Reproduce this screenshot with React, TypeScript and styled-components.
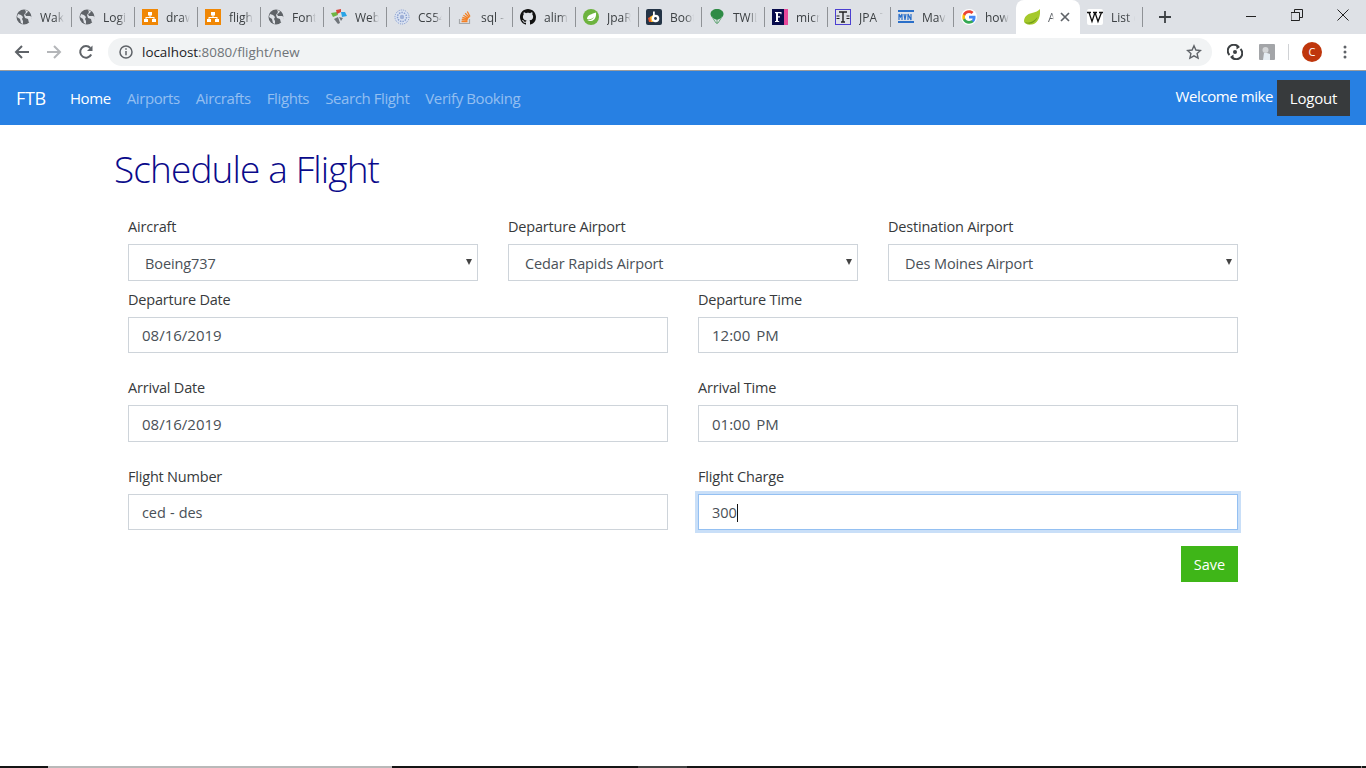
import React from "react";
import styled, { createGlobalStyle } from "styled-components";

const Global = createGlobalStyle`
  html, body { margin: 0; padding: 0; background: #fff; }
  body { font-family: "Open Sans", "Liberation Sans", sans-serif; overflow: hidden; }
  #root { height: 768px; }
`;

const Page = styled.div`
  display: flex;
  flex-direction: column;
  height: 768px;
  width: 1366px;
`;

/* ---------- browser chrome ---------- */
const TabStrip = styled.div`
  display: flex;
  align-items: flex-start;
  height: 34px;
  background: #dee1e6;
  padding-left: 9px;
`;
const Tab = styled.div<{ $last?: boolean }>`
  width: ${(p) => (p.$last ? 62 : 63)}px;
  height: 34px;
  box-sizing: border-box;
  padding-left: 7px;
  display: flex;
  align-items: center;
  gap: 8px;
  position: relative;
  flex: none;
  &::after {
    content: "";
    display: ${(p) => (p.$last ? "none" : "block")};
    position: absolute;
    right: 0;
    top: 7px;
    width: 1px;
    height: 20px;
    background: #8f9296;
  }
`;
const ActiveTab = styled(Tab)`
  width: 64px;
  background: #fff;
  border-radius: 8px 8px 0 0;
  padding-left: 8px;
  &::after { display: none; }
`;
const TabLabel = styled.span`
  font-family: "Open Sans", sans-serif;
  font-size: 12px;
  color: #3c4043;
  white-space: nowrap;
  width: 24px;
  overflow: hidden;
  -webkit-mask-image: linear-gradient(90deg, #000 65%, transparent);
  mask-image: linear-gradient(90deg, #000 65%, transparent);
`;
const ActiveLabel = styled(TabLabel)`
  width: 6px;
  color: #5f6368;
`;
const TabClose = styled.span`
  display: flex;
  margin-left: -2px;
`;
const NewTab = styled.div`
  display: flex;
  align-items: center;
  justify-content: center;
  width: 44px;
  height: 34px;
`;
const WindowButtons = styled.div`
  margin-left: auto;
  display: flex;
  height: 30px;
`;
const WindowButton = styled.div`
  width: 46px;
  display: flex;
  align-items: center;
  justify-content: center;
`;
const Toolbar = styled.div`
  display: flex;
  align-items: center;
  height: 37px;
  flex: none;
  background: #fff;
  padding: 0 0 1px 6px;
  box-sizing: border-box;
  border-bottom: 1px solid #9c9c9c;
`;
const ToolButton = styled.div`
  width: 32px;
  display: flex;
  justify-content: center;
`;
const Omnibox = styled.div`
  flex: none;
  width: 1104px;
  height: 28px;
  margin-left: 6px;
  background: #f1f3f4;
  border-radius: 14px;
  display: flex;
  align-items: center;
  padding-left: 11px;
  padding-right: 10px;
  box-sizing: border-box;
`;
const Url = styled.span`
  font-family: "Open Sans", sans-serif;
  font-size: 13.4px;
  color: #6f7378;
  margin-left: 9px;
  flex: 1;
`;
const Host = styled.span`
  color: #202124;
`;
const ToolbarRight = styled.div`
  display: flex;
  align-items: center;
  margin-left: 7px;
`;
const ExtSlot = styled.div`
  width: 32px;
  display: flex;
  justify-content: center;
`;
const ToolDivider = styled.div`
  width: 1px;
  height: 16px;
  background: #d0d2d5;
  margin: 0 13px 0 5px;
`;
const Avatar = styled.div`
  width: 20px;
  height: 20px;
  border-radius: 50%;
  background: #bf360c;
  color: #fff;
  font-family: "Open Sans", sans-serif;
  font-size: 11px;
  line-height: 20px;
  text-align: center;
`;
const MenuDots = styled.div`
  margin-left: 21px;
  display: flex;
`;

/* ---------- app nav ---------- */
const Navbar = styled.nav`
  height: 54px;
  flex: none;
  box-sizing: border-box;
  background: #2780e3;
  display: flex;
  align-items: center;
  padding: 0 16px;
`;
const Brand = styled.span`
  font-size: 18px;
  color: #fff;
  margin-right: 16px;
  letter-spacing: -0.3px;
`;
const NavLinks = styled.div`
  display: flex;
`;
const NavLink = styled.a<{ $active?: boolean }>`
  font-size: 15px;
  letter-spacing: -0.4px;
  padding: 0 8px;
  color: ${(p) => (p.$active ? "#fff" : "rgba(255,255,255,.5)")};
`;
const NavRight = styled.div`
  margin-left: auto;
  display: flex;
  align-items: center;
`;
const Welcome = styled.span`
  font-size: 15px;
  letter-spacing: -0.42px;
  color: #fff;
  margin-right: 4px;
  position: relative;
  top: -2px;
`;
const Logout = styled.button`
  height: 36px;
  width: 73px;
  border: 0;
  padding: 0;
  background: #373a3c;
  color: #fff;
  font: inherit;
  font-size: 15px;
  letter-spacing: -0.2px;
`;

/* ---------- form ---------- */
const Main = styled.main`
  width: 1140px;
  margin: 0 auto;
  flex: 1;
  box-sizing: border-box;
`;
const Title = styled.h1`
  margin: 18px 0 0 1px;
  font-weight: 300;
  font-size: 37px;
  letter-spacing: -0.88px;
  line-height: 52px;
  color: #0a0a8a;
`;
const Form = styled.form`
  padding: 0 15px;
  margin-top: 19px;
`;
const Row = styled.div<{ $cols: number; $gap: number }>`
  display: grid;
  grid-template-columns: repeat(${(p) => p.$cols}, 1fr);
  column-gap: 30px;
  margin-bottom: ${(p) => p.$gap}px;
`;
const Group = styled.div`
  display: flex;
  flex-direction: column;
`;
const Label = styled.label`
  font-size: 14.5px;
  letter-spacing: -0.2px;
  line-height: 24px;
  color: #373a3c;
  padding-top: 1px;
  margin-bottom: 5px;
`;
const Control = styled.div<{ $focused?: boolean; $select?: boolean; $numeric?: boolean; $tall?: boolean }>`
  height: ${(p) => (p.$tall ? 37 : 36)}px;
  box-sizing: border-box;
  border: 1px solid ${(p) => (p.$focused ? "#94c0f2" : "#ced4da")};
  box-shadow: ${(p) => (p.$focused ? "0 0 0 3px rgba(39,128,227,.25)" : "none")};
  padding-left: ${(p) => (p.$select ? 16 : 13)}px;
  padding-top: ${(p) => (p.$numeric && !p.$tall ? 0 : 1)}px;
  font-size: ${(p) => (p.$numeric ? 15 : 14.5)}px;
  letter-spacing: ${(p) => (p.$numeric ? 0 : -0.1)}px;
  word-spacing: ${(p) => (p.$numeric ? 2 : p.$select ? 0 : 0.6)}px;
  color: #495057;
  background: #fff;
  display: flex;
  align-items: center;
  white-space: pre;
  position: relative;
`;
const Caret = styled.span`
  display: inline-block;
  width: 1px;
  height: 18px;
  background: #111;
`;
const SelectArrow = styled.span`
  position: absolute;
  right: 5px;
  top: 14px;
  width: 0;
  height: 0;
  border-left: 3px solid transparent;
  border-right: 3px solid transparent;
  border-top: 6px solid #444;
`;
const Actions = styled.div`
  display: flex;
  justify-content: flex-end;
  margin-top: 16px;
`;
const Save = styled.button`
  height: 36px;
  width: 57px;
  border: 0;
  padding: 0;
  background: #3fb618;
  color: #fff;
  font: inherit;
  font-size: 14.5px;
`;

/* ---------- OS bottom edge ---------- */
const Edge = styled.div`
  height: 2px;
  flex: none;
  display: flex;
  background: #151515;
`;
const EdgePart = styled.div<{ $w: number; $c: string }>`
  width: ${(p) => p.$w}px;
  background: ${(p) => p.$c};
`;

/* ---------- favicons ---------- */
const Globe = () => (
  <svg width="16" height="16" viewBox="0 0 16 16">
    <circle cx="8" cy="8" r="7.500" fill="#5f6368" />
    <path d="M2 5l3 1 2 2-1 2 1 2v3l-2-1-1-4-3-2zM9 1l3 1-1 2-2 1 1 2 4 0 2 1-1 4-2 2-1-4-3-1-1-3 2-3z" fill="#dee1e6" />
  </svg>
);
const Draw = () => (
  <svg width="16" height="16" viewBox="0 0 16 16">
    <rect width="16" height="16" fill="#f08705" />
    <path d="M6 3h4v3.500H8.500v1.500H12.500v2H14v3h-4v-3h1.500V9h-7v1H6v3H2v-3h1.500V8h4V6.500H6z" fill="#fff" />
  </svg>
);
const Pinwheel = () => (
  <svg width="16" height="16" viewBox="0 0 16 16">
    <path d="M0 4l6-1 1 3-5 2z" fill="#6fb544" />
    <path d="M8 2l5-1 0 3-4 2z" fill="#d9453a" transform="translate(-3 -1)" />
    <path d="M10 3l4 0 2 4-5 1z" fill="#2aa4e6" />
    <path d="M3 10l4-2 2 6-2 1z" fill="#70757a" />
    <path d="M8 8l4 1-2 3z" fill="#70757a" />
  </svg>
);
const Seal = () => (
  <svg width="16" height="16" viewBox="0 0 16 16">
    <circle cx="8" cy="8" r="7.500" fill="#dbe3f2" />
    <circle cx="8" cy="8" r="7" fill="none" stroke="#7d94c6" strokeDasharray="1 1" />
    <circle cx="8" cy="8" r="4.500" fill="none" stroke="#8aa0cf" strokeWidth="1.500" strokeDasharray="1.500 1" />
    <circle cx="8" cy="8" r="2.200" fill="#9fb1d8" />
  </svg>
);
const Stack = () => (
  <svg width="16" height="16" viewBox="0 0 16 16" fill="none">
    <path d="M2.500 10v4.500h10V10" stroke="#a5a7aa" strokeWidth="1.200" />
    <path d="M4.500 12.500h6M4.700 10.500l5.800.6M5.300 8.500l5.700 1.500M6.400 6.300l5.100 3M8.200 4.300l4.200 4.200M10.300 2.500l2.700 5" stroke="#f48024" strokeWidth="1.300" />
  </svg>
);
const GitHub = () => (
  <svg width="16" height="16" viewBox="0 0 16 16">
    <path fill="#111" d="M8 0C3.580 0 0 3.580 0 8c0 3.540 2.290 6.530 5.470 7.590.4.070.55-.17.55-.38 0-.19-.01-.82-.01-1.490-2.010.37-2.530-.49-2.690-.94-.09-.23-.48-.94-.82-1.130-.28-.15-.68-.52-.01-.53.63-.01 1.080.58 1.230.82.72 1.210 1.870.87 2.330.66.070-.52.280-.87.510-1.070-1.780-.2-3.640-.89-3.640-3.950 0-.87.310-1.590.820-2.150-.08-.2-.36-1.020.08-2.120 0 0 .67-.21 2.200.82.64-.18 1.320-.27 2-.27s1.360.09 2 .27c1.530-1.040 2.200-.82 2.200-.82.44 1.100.16 1.920.08 2.120.51.560.82 1.270.82 2.150 0 3.070-1.870 3.750-3.650 3.950.29.250.54.730.54 1.480 0 1.070-.01 1.930-.01 2.200 0 .21.150.46.550.38A8.010 8.010 0 0 0 16 8c0-4.420-3.580-8-8-8z" />
  </svg>
);
const Spring = () => (
  <svg width="16" height="16" viewBox="0 0 16 16">
    <circle cx="8" cy="8" r="8" fill="#6db33f" />
    <path d="M13 3.500c.5 4-1 8-5 8.500-2 .2-3.500-.5-4-1 3 1 6-1 7-3-2 2-5 3-7 2 0-4 5-5 9-6.500z" fill="#fff" />
  </svg>
);
const Boot = () => (
  <svg width="16" height="16" viewBox="0 0 16 16">
    <rect width="16" height="16" rx="2" fill="#243446" />
    <path d="M2 9l4-2v6H3z" fill="#e8562a" />
    <path d="M4 8l3-2v7H5z" fill="#f5b82e" />
    <circle cx="9.500" cy="9.500" r="3.800" fill="#fff" />
    <rect x="7" y="2.500" width="1.800" height="7" fill="#fff" />
    <circle cx="9.500" cy="9.500" r="1.400" fill="#243446" />
  </svg>
);
const Balloon = () => (
  <svg width="16" height="16" viewBox="0 0 16 16">
    <path d="M8 0c3.500 0 6.500 2 6.500 5 0 3-3.500 5-6.500 6-3-1-6.500-3-6.500-6 0-3 3-5 6.500-5z" fill="#2e8b45" />
    <path d="M2.500 7L7 14h2l4.500-7M8 10v5" stroke="#6aa97c" strokeWidth="1" fill="none" />
  </svg>
);
const Fav = () => (
  <svg width="16" height="16" viewBox="0 0 16 16">
    <rect width="12" height="16" fill="#070b4c" />
    <rect x="12" width="4" height="16" fill="#e8489a" />
    <path d="M3 3h6.500v2.300H8.500V4.200H6v3h2V8.400H6V12h1.200v1H3v-1h1V4.200H3z" fill="#fff" />
  </svg>
);
const JpaIcon = () => (
  <svg width="16" height="16" viewBox="0 0 16 16" fill="none">
    <rect x=".5" y=".5" width="15" height="15" stroke="#4b3fd1" />
    <path d="M4 3h8M8 3v10M6 13h4" stroke="#222" strokeWidth="1.400" />
    <path d="M1.500 7h3M1.500 9.500h3M11.500 7h3M11.500 9.500h3" stroke="#222" />
  </svg>
);
const Mvn = () => (
  <svg width="16" height="16" viewBox="0 0 16 16">
    <rect y="1" width="16" height="2" fill="#2a6fc9" />
    <rect y="12" width="16" height="2" fill="#2a6fc9" />
    <path d="M1 11V5l1.500 3L4 5v6M6 5l1 6 1-6M10 11V5l3 6V5" stroke="#2a6fc9" strokeWidth="1.200" fill="none" />
  </svg>
);
const Google = () => (
  <svg width="16" height="16" viewBox="0 0 48 48">
    <rect width="48" height="48" rx="24" fill="#fff" />
    <path fill="#4285F4" d="M43.600 24.500c0-1.500-.1-2.900-.4-4.300H24v8.100h11c-.5 2.600-1.900 4.700-4 6.200v5.200h6.500c3.800-3.500 6.100-8.700 6.100-15.200z" />
    <path fill="#34A853" d="M24 44c5.400 0 10-1.800 13.500-4.800L31 34c-1.800 1.200-4.100 2-7 2-5.300 0-9.900-3.600-11.500-8.500H5.800v5.300C9.100 39.400 16 44 24 44z" />
    <path fill="#FBBC05" d="M12.500 27.500c-.4-1.200-.7-2.500-.7-3.500s.3-2.300.7-3.500v-5.300H5.800C4.600 17.900 4 20.900 4 24s.6 6.100 1.800 8.800z" />
    <path fill="#EA4335" d="M24 12c3 0 5.700 1 7.800 3.100l5.800-5.800C34 6 29.400 4 24 4 16 4 9.100 8.600 5.800 15.200l6.700 5.300C14.100 15.600 18.700 12 24 12z" />
  </svg>
);
const Leaf = () => (
  <svg width="16" height="16" viewBox="0 0 16 16">
    <path d="M16 0c.5 6-1 14-8 15.500-4 .6-7.500-.5-8-3C0 8 3 5 8 4c3.500-.7 6.500-2 8-4z" fill="#a5c92b" />
    <path d="M.5 13c4 1.500 9 .5 13-5-2 5.500-8 9-13 5z" fill="#6f9a1a" />
  </svg>
);
const Wiki = () => (
  <svg width="16" height="16" viewBox="0 0 16 16">
    <rect width="16" height="16" rx="2" fill="#fff" />
    <path d="M0 3.500h4M2 3.500l3 9 3-9M6 3.500h4M8 3.500l3 9 3.500-9M12 3.500h4" fill="none" stroke="#111" strokeWidth="1.300" />
  </svg>
);

const tabs: [React.ReactNode, string][] = [
  [<Globe />, "Wak"],
  [<Globe />, "Logi"],
  [<Draw />, "draw"],
  [<Draw />, "fligh"],
  [<Globe />, "Font"],
  [<Pinwheel />, "Web"],
  [<Seal />, "CS54"],
  [<Stack />, "sql -"],
  [<GitHub />, "alim"],
  [<Spring />, "JpaR"],
  [<Boot />, "Boot"],
  [<Balloon />, "TWIL"],
  [<Fav />, "micr"],
  [<JpaIcon />, "JPA T"],
  [<Mvn />, "Mav"],
];

const stroke = { fill: "none", strokeLinecap: "square" as const };

export default function App() {
  return (
    <Page>
      <Global />
      <TabStrip>
        {tabs.map(([icon, label], i) => (
          <Tab key={i}>
            {icon}
            <TabLabel>{label}</TabLabel>
          </Tab>
        ))}
        <Tab $last>
          <Google />
          <TabLabel>how</TabLabel>
        </Tab>
        <ActiveTab $last>
          <Leaf />
          <ActiveLabel>A</ActiveLabel>
          <TabClose>
            <svg width="10" height="10" viewBox="0 0 10 10">
              <path d="M1 1l8 8M9 1L1 9" stroke="#5f6368" strokeWidth="1.700" fill="none" />
            </svg>
          </TabClose>
        </ActiveTab>
        <Tab>
          <Wiki />
          <TabLabel>List o</TabLabel>
        </Tab>
        <NewTab>
          <svg width="12" height="12" viewBox="0 0 12 12">
            <path d="M6 0v12M0 6h12" stroke="#3c4043" strokeWidth="1.800" />
          </svg>
        </NewTab>
        <WindowButtons>
          <WindowButton>
            <svg width="12" height="12" viewBox="0 0 12 12"><path d="M1 7.500h10" stroke="#222" /></svg>
          </WindowButton>
          <WindowButton>
            <svg width="12" height="12" viewBox="0 0 12 12"><path d="M.5 3.500h8v8h-8zM3.500 3.500v-3h8v8h-3" stroke="#222" {...stroke} /></svg>
          </WindowButton>
          <WindowButton>
            <svg width="12" height="12" viewBox="0 0 12 12"><path d="M.5.500l11 11M11.500.500l-11 11" stroke="#222" fill="none" /></svg>
          </WindowButton>
        </WindowButtons>
      </TabStrip>
      <Toolbar>
        <ToolButton>
          <svg width="16" height="16" viewBox="0 0 16 16"><path d="M15 8H2M8 2L2 8l6 6" stroke="#5f6368" strokeWidth="2" fill="none" /></svg>
        </ToolButton>
        <ToolButton>
          <svg width="16" height="16" viewBox="0 0 16 16"><path d="M1 8h13M8 2l6 6-6 6" stroke="#b4b6b9" strokeWidth="2" fill="none" /></svg>
        </ToolButton>
        <ToolButton>
          <svg width="16" height="16" viewBox="0 0 16 16">
            <path d="M13.200 10.500A5.800 5.800 0 1 1 12.300 4" stroke="#5f6368" strokeWidth="2" fill="none" />
            <path d="M14.500 1.500v5.500H9z" fill="#5f6368" />
          </svg>
        </ToolButton>
        <Omnibox>
          <svg width="14" height="14" viewBox="0 0 14 14">
            <circle cx="7" cy="7" r="6" stroke="#5f6368" strokeWidth="1.500" fill="none" />
            <path d="M7 6v4.200M7 3.300v1.500" stroke="#5f6368" strokeWidth="1.500" />
          </svg>
          <Url><Host>localhost</Host>:8080/flight/new</Url>
          <svg width="16" height="16" viewBox="0 0 16 16">
            <path d="M8 1.800l1.900 4.200 4.600.5-3.400 3.100 1 4.500L8 11.800l-4.100 2.300 1-4.500L1.500 6.500l4.600-.5z" stroke="#5f6368" strokeWidth="1.400" fill="none" />
          </svg>
        </Omnibox>
        <ToolbarRight>
          <ExtSlot>
            <svg width="16" height="16" viewBox="0 0 16 16">
              <path d="M2.500 11A6 6 0 0 1 11 2.500M13.500 5A6 6 0 0 1 5 13.500" stroke="#3c4043" strokeWidth="2" fill="none" />
              <path d="M9.500 0l3.500 3-3.500 2.500zM6.500 16L3 13l3.500-2.500z" fill="#3c4043" />
              <circle cx="8" cy="8" r="2" fill="#3c4043" />
            </svg>
          </ExtSlot>
          <ExtSlot>
            <svg width="16" height="16" viewBox="0 0 16 16">
              <rect width="16" height="16" rx="1" fill="#a3a5a8" />
              <circle cx="6.500" cy="6" r="3" fill="#d4d6d8" />
              <path d="M5 9h3l3 1v6H4z" fill="#e6edf3" />
            </svg>
          </ExtSlot>
          <ToolDivider />
          <Avatar>C</Avatar>
          <MenuDots>
            <svg width="4" height="14" viewBox="0 0 4 14">
              <circle cx="2" cy="2" r="1.500" fill="#5f6368" />
              <circle cx="2" cy="7" r="1.500" fill="#5f6368" />
              <circle cx="2" cy="12" r="1.500" fill="#5f6368" />
            </svg>
          </MenuDots>
        </ToolbarRight>
      </Toolbar>
      <Navbar>
        <Brand>FTB</Brand>
        <NavLinks>
          <NavLink $active>Home</NavLink>
          <NavLink>Airports</NavLink>
          <NavLink>Aircrafts</NavLink>
          <NavLink>Flights</NavLink>
          <NavLink>Search Flight</NavLink>
          <NavLink>Verify Booking</NavLink>
        </NavLinks>
        <NavRight>
          <Welcome>Welcome mike</Welcome>
          <Logout>Logout</Logout>
        </NavRight>
      </Navbar>
      <Main>
        <Title>Schedule a Flight</Title>
        <Form>
          <Row $cols={3} $gap={6}>
            <Group>
              <Label>Aircraft</Label>
              <Control $select $tall>Boeing737<SelectArrow /></Control>
            </Group>
            <Group>
              <Label>Departure Airport</Label>
              <Control $select $tall>Cedar Rapids Airport<SelectArrow /></Control>
            </Group>
            <Group>
              <Label>Destination Airport</Label>
              <Control $select $tall>Des Moines Airport<SelectArrow /></Control>
            </Group>
          </Row>
          <Row $cols={2} $gap={22}>
            <Group>
              <Label>Departure Date</Label>
              <Control $numeric>08/16/2019</Control>
            </Group>
            <Group>
              <Label>Departure Time</Label>
              <Control $numeric>12:00 PM</Control>
            </Group>
          </Row>
          <Row $cols={2} $gap={22}>
            <Group>
              <Label>Arrival Date</Label>
              <Control $numeric $tall>08/16/2019</Control>
            </Group>
            <Group>
              <Label>Arrival Time</Label>
              <Control $numeric $tall>01:00 PM</Control>
            </Group>
          </Row>
          <Row $cols={2} $gap={0}>
            <Group>
              <Label>Flight Number</Label>
              <Control>ced - des</Control>
            </Group>
            <Group>
              <Label>Flight Charge</Label>
              <Control $focused>300<Caret /></Control>
            </Group>
          </Row>
          <Actions>
            <Save type="button">Save</Save>
          </Actions>
        </Form>
      </Main>
      <Edge>
        <EdgePart $w={48} $c="#151515" />
        <EdgePart $w={344} $c="#b9b9b9" />
        <EdgePart $w={246} $c="#151515" />
        <EdgePart $w={49} $c="#444" />
        <EdgePart $w={674} $c="#151515" />
        <EdgePart $w={1} $c="#888" />
      </Edge>
    </Page>
  );
}
